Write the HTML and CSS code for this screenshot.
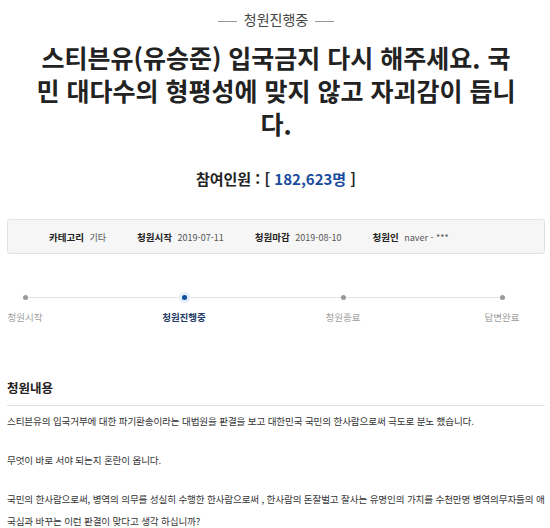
FILE: index.html
```html
<!DOCTYPE html>
<html lang="ko">
<head>
  <meta charset="UTF-8" />
  <meta name="viewport" content="width=device-width, initial-scale=1" />
  <title>청원진행중</title>
  <link rel="stylesheet" href="styles.css">
</head>
<body>

  <div class="status-tag"><span>청원진행중</span></div>

  <h1 class="petition-title">스티븐유(유승준) 입국금지 다시 해주세요. 국민 대다수의 형평성에 맞지 않고 자괴감이 듭니다.</h1>

  <p class="count">참여인원 : [ <span class="count-num">182,623명</span> ]</p>

  <ul class="info-box">
    <li><strong>카테고리</strong> 기타</li>
    <li><strong>청원시작</strong> 2019-07-11</li>
    <li><strong>청원마감</strong> 2019-08-10</li>
    <li><strong>청원인</strong> naver - ***</li>
  </ul>

  <!-- 진행 단계 -->
  <div class="steps">
    <div class="step"><i class="dot"></i>청원시작</div>
    <div class="step active"><i class="dot"></i>청원진행중</div>
    <div class="step"><i class="dot"></i>청원종료</div>
    <div class="step"><i class="dot"></i>답변완료</div>
  </div>

  <h2 class="section-title">청원내용</h2>
  <div class="content">
    <p>스티븐유의 입국거부에 대한 파기환송이라는 대법원을 판결을 보고 대한민국 국민의 한사람으로써 극도로 분노 했습니다.</p>
    <p>무엇이 바로 서야 되는지 혼란이 옵니다.</p>
    <p>국민의 한사람으로써, 병역의 의무를 성실히 수행한 한사람으로써 , 한사람의 돈잘벌고 잘사는 유명인의 가치를 수천만명 병역의무자들의 애국심과 바꾸는 이런 판결이 맞다고 생각 하십니까?</p>
  </div>

</body>
</html>
```

FILE: styles.css
```css
body {
  margin: 0;
  padding: 0 5px 0 7px;
  font-family: 'Noto Sans CJK KR', 'Noto Sans', sans-serif;
  background-color: #fff;
  color: #333;
}
.status-tag {
  margin-top: 9px;
  text-align: center;
  font-size: 14px;
  line-height: 20px;
  color: #444;
}
.status-tag span::before,
.status-tag span::after {
  content: '';
  display: inline-block;
  width: 19px;
  height: 1px;
  background-color: #999;
  vertical-align: middle;
  margin: 0 7px;
}
.petition-title {
  width: 490px;
  margin: 12px auto 0;
  text-align: center;
  font-size: 25px;
  line-height: 33px;
  font-weight: 700;
  color: #222;
}
.count {
  margin: 29px 0 0;
  text-align: center;
  font-size: 15px;
  line-height: 20px;
  font-weight: 700;
  color: #222;
}
.count-num {
  color: #1a4c9e;
}
.info-box {
  list-style: none;
  margin: 30px 0 0;
  padding: 0 0 0 41px;
  height: 33px;
  display: flex;
  align-items: center;
  gap: 31px;
  background-color: #f6f6f6;
  border: 1px solid #e2e2e2;
  border-radius: 3px;
  font-size: 9px;
  color: #555;
}
.info-box strong {
  font-size: 9.5px;
  color: #222;
  margin-right: 3px;
}
.steps {
  position: relative;
  display: flex;
  justify-content: space-between;
  width: 521px;
  margin-top: 38px;
  margin-left: -4px;
}
.steps::before {
  content: '';
  position: absolute;
  left: 22px;
  right: 22px;
  top: 5px;
  height: 1px;
  background-color: #e3e3e3;
}
.step {
  position: relative;
  width: 44px;
  display: flex;
  flex-direction: column;
  align-items: center;
  font-size: 9.5px;
  line-height: 14px;
  color: #a0a0a0;
  white-space: nowrap;
}
.dot {
  width: 5px;
  height: 5px;
  border-radius: 50%;
  background-color: #999;
  margin: 3px 0 10px;
}
.step.active {
  color: #243c66;
  font-weight: 700;
}
.step.active .dot {
  background-color: #0b4ea2;
  box-shadow: 0 0 0 3px #e4edf8;
}
.section-title {
  margin: 55px 0 0;
  padding-bottom: 8px;
  border-bottom: 1px solid #e0e0e0;
  font-size: 12.5px;
  line-height: 18px;
  font-weight: 700;
  color: #222;
}
.content {
  font-size: 9.6px;
  letter-spacing: -0.15px;
  color: #333;
  padding-top: 4px;
  margin-right: -5px;
}
.content p {
  margin: 0 0 17px;
  line-height: 22px;
}
```
